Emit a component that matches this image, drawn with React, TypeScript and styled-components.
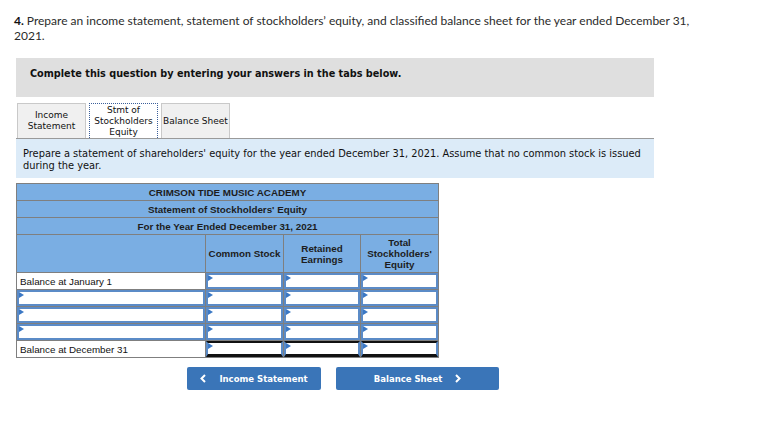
import React from "react";
import styled, { createGlobalStyle } from "styled-components";

const Global = createGlobalStyle`
  html, body { margin: 0; padding: 0; background: #fff; }
  body { font-family: "Liberation Sans", Arial, sans-serif; }
`;

const Page = styled.div`
  padding: 13px 14px 0 14px;
  width: 781px;
  box-sizing: border-box;
`;

const Question = styled.div`
  font-family: Lato, "Open Sans", sans-serif;
  font-size: 12px;
  line-height: 15px;
  color: #2b2b2b;
  width: 690px;
`;

const Num = styled.span`
  font-weight: 700;
  color: #111;
  margin-right: 3px;
`;

const Wrap = styled.div`
  margin-left: 2px;
  width: 638px;
`;

const Instructions = styled.div`
  margin-top: 15px;
  background: #dfdfdf;
  height: 39px;
  box-sizing: border-box;
  padding: 10px 14px;
  font-family: "DejaVu Sans", Verdana, sans-serif;
  font-weight: 700;
  font-size: 9.7px;
  line-height: 12px;
  color: #111;
`;

const Tabs = styled.div`
  margin-top: 6px;
  display: flex;
  gap: 3px;
  padding-left: 1px;
  height: 35px;
`;

const Tab = styled.div<{ $active?: boolean }>`
  width: 69px;
  height: 35px;
  box-sizing: border-box;
  display: flex;
  align-items: center;
  justify-content: center;
  text-align: center;
  font-family: "DejaVu Sans", Verdana, sans-serif;
  font-size: 9px;
  line-height: 11px;
  color: #111;
  background: ${(p) => (p.$active ? "#fff" : "#f0f0f0")};
  border: ${(p) => (p.$active ? "1px dotted #3b5f9a" : "1px solid #c9c9c9")};
  border-bottom: none;
`;

const Prompt = styled.div`
  border-top: 1px solid #9a9a9a;
  background: #dcebf8;
  height: 40px;
  box-sizing: border-box;
  padding: 9px 7px 0 7px;
  font-family: "DejaVu Sans", Verdana, sans-serif;
  font-size: 9.85px;
  line-height: 12px;
  color: #111;
`;

const Table = styled.table`
  margin-top: 5px;
  border-collapse: collapse;
  width: 422px;
  table-layout: fixed;
  font-family: "Liberation Sans", Arial, sans-serif;
  font-size: 9.8px;
  color: #111;
`;

const HeadCell = styled.td<{ $tall?: boolean }>`
  background: #7aaee3;
  border: 1px solid #7f7f7f;
  text-align: center;
  height: ${(p) => (p.$tall ? "37px" : "16px")};
  padding: 0 2px;
  font-weight: 700;
  color: #1d1d1d;
  line-height: 11px;
`;

const TitleCell = styled(HeadCell)`
  height: 16px;
`;

const LabelCell = styled.td`
  border: 1px solid #7f7f7f;
  height: 16px;
  padding: 0 0 0 3px;
  background: #fff;
`;

const InCell = styled.td`
  border: 1px solid #7f7f7f;
  height: 16px;
  padding: 0;
  background: #fff;
`;

const InputBox = styled.div<{ $total?: boolean }>`
  position: relative;
  height: 16px;
  box-sizing: border-box;
  border: 2px solid #5b8bc7;
  border-top: ${(p) => (p.$total ? "2px solid #111" : "2px solid #5b8bc7")};
  border-bottom: ${(p) => (p.$total ? "3px solid #111" : "2px solid #5b8bc7")};
  background: #fff;
  &::before {
    content: "";
    position: absolute;
    left: 0;
    top: 0;
    border-left: 5px solid #3b78c4;
    border-top: 3px solid transparent;
    border-bottom: 3px solid transparent;
  }
`;

const Nav = styled.div`
  margin-top: 9px;
  display: flex;
  gap: 15px;
  padding-left: 171px;
`;

const NavButton = styled.div<{ $w: number }>`
  width: ${(p) => p.$w}px;
  height: 23px;
  background: #3a75b8;
  border-radius: 2px;
  display: flex;
  align-items: center;
  justify-content: center;
  gap: 13px;
  color: #fff;
  font-family: "DejaVu Sans", Verdana, sans-serif;
  font-weight: 700;
  font-size: 8.5px;
`;

const Chevron = ({ dir }: { dir: "l" | "r" }) => (
  <svg width="6" height="9" viewBox="0 0 6 9">
    <path
      d={dir === "l" ? "M5 1 L1.5 4.5 L5 8" : "M1 1 L4.5 4.5 L1 8"}
      fill="none"
      stroke="#fff"
      strokeWidth="2"
    />
  </svg>
);

export default function App() {
  const rows: { label?: string; total?: boolean }[] = [
    { label: "Balance at January 1" },
    {},
    {},
    {},
    { label: "Balance at December 31", total: true },
  ];
  return (
    <>
      <Global />
      <Page>
        <Question>
          <Num>4.</Num>Prepare an income statement, statement of stockholders’ equity, and classified balance sheet for the year ended December 31, 2021.
        </Question>
        <Wrap>
          <Instructions>Complete this question by entering your answers in the tabs below.</Instructions>
          <Tabs>
            <Tab>Income<br />Statement</Tab>
            <Tab $active>Stmt of<br />Stockholders<br />Equity</Tab>
            <Tab>Balance Sheet</Tab>
          </Tabs>
          <Prompt>
            Prepare a statement of shareholders' equity for the year ended December 31, 2021. Assume that no common stock is issued during the year.
          </Prompt>
          <Table>
            <colgroup>
              <col style={{ width: 189 }} />
              <col style={{ width: 78 }} />
              <col style={{ width: 77 }} />
              <col style={{ width: 78 }} />
            </colgroup>
            <tbody>
              <tr><TitleCell colSpan={4}>CRIMSON TIDE MUSIC ACADEMY</TitleCell></tr>
              <tr><TitleCell colSpan={4}>Statement of Stockholders' Equity</TitleCell></tr>
              <tr><TitleCell colSpan={4}>For the Year Ended December 31, 2021</TitleCell></tr>
              <tr>
                <HeadCell $tall />
                <HeadCell $tall>Common Stock</HeadCell>
                <HeadCell $tall>Retained<br />Earnings</HeadCell>
                <HeadCell $tall>Total<br />Stockholders'<br />Equity</HeadCell>
              </tr>
              {rows.map((r, i) => (
                <tr key={i}>
                  {r.label ? (
                    <LabelCell>{r.label}</LabelCell>
                  ) : (
                    <InCell><InputBox /></InCell>
                  )}
                  <InCell><InputBox $total={r.total} /></InCell>
                  <InCell><InputBox $total={r.total} /></InCell>
                  <InCell><InputBox $total={r.total} /></InCell>
                </tr>
              ))}
            </tbody>
          </Table>
          <Nav>
            <NavButton $w={134}><Chevron dir="l" />Income Statement</NavButton>
            <NavButton $w={163}>Balance Sheet<Chevron dir="r" /></NavButton>
          </Nav>
        </Wrap>
      </Page>
    </>
  );
}
